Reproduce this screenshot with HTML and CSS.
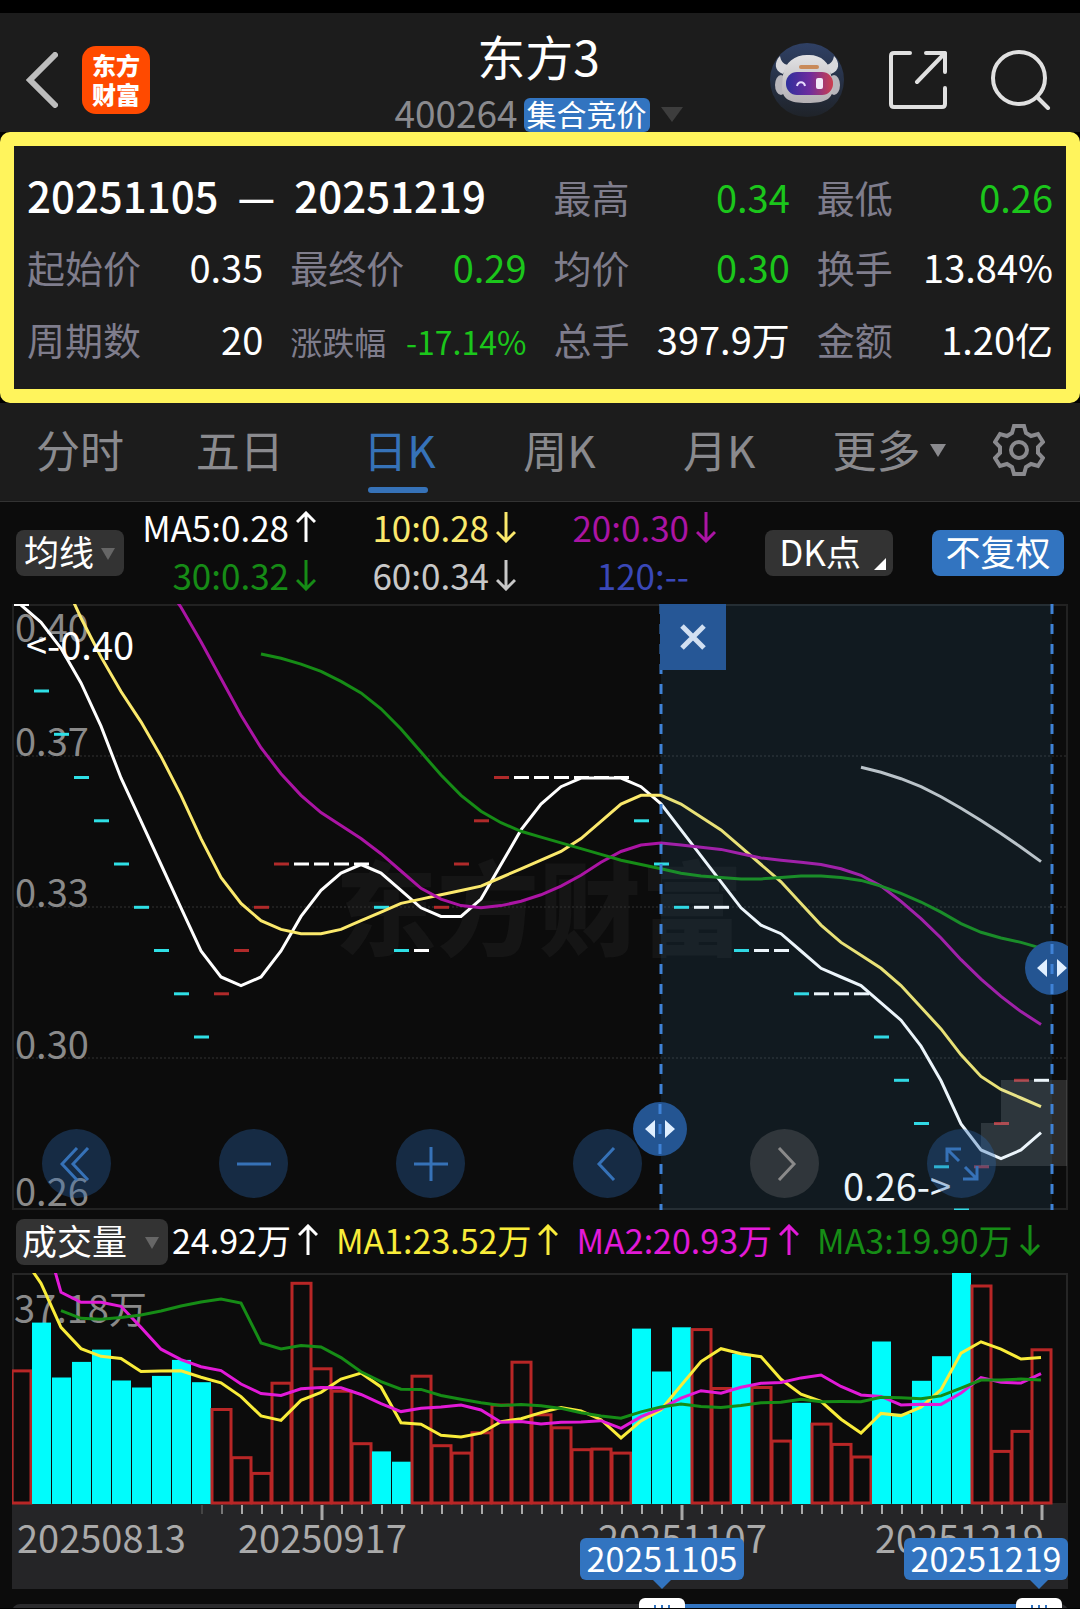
FILE: index.html
```html
<!DOCTYPE html>
<html lang="zh-CN">
<head>
    <meta charset="UTF-8">
    <meta name="viewport" content="width=device-width, initial-scale=1.0">
    <title>东方3 400264</title>
    <link rel="stylesheet" href="styles.css">
</head>
<body>
    <svg width="0" height="0" class="defs" aria-hidden="true">
        <symbol id="arrow-up" viewBox="0 0 20 32">
            <path d="M10 31V2M1 11L10 2L19 11" fill="none" stroke="currentColor" stroke-width="3"/>
        </symbol>
        <symbol id="arrow-down" viewBox="0 0 20 32">
            <path d="M10 1V30M1 21L10 30L19 21" fill="none" stroke="currentColor" stroke-width="3"/>
        </symbol>
    </svg>

    <header class="header">
        <div class="header-left">
            <button class="icon-btn" aria-label="返回">
                <svg width="32" height="56" viewBox="0 0 32 56">
                    <path d="M29 3L4 28L29 53" fill="none" stroke="#bdbdbd" stroke-width="6" stroke-linecap="round"/>
                </svg>
            </button>
            <div class="logo">东方<br>财富</div>
        </div>
        <div class="title">
            <h1>东方3</h1>
            <div class="subtitle">
                <span class="code">400264</span>
                <span class="badge">集合竞价</span>
                <span class="tri tri-title"></span>
            </div>
        </div>
        <div class="header-right">
            <button class="icon-btn" aria-label="助手">
                <svg width="76" height="76" viewBox="0 0 76 76">
                    <defs>
                        <linearGradient id="sky" x1="0" y1="0" x2="0" y2="1">
                            <stop offset="0" stop-color="#2f4064"/>
                            <stop offset="1" stop-color="#1f2329"/>
                        </linearGradient>
                        <linearGradient id="visor" x1="0" y1="0" x2="1" y2="0">
                            <stop offset="0" stop-color="#2f2f9c"/>
                            <stop offset="0.5" stop-color="#6d2c9e"/>
                            <stop offset="1" stop-color="#cc3f4e"/>
                        </linearGradient>
                        <linearGradient id="helmet" x1="0" y1="0" x2="0" y2="1">
                            <stop offset="0" stop-color="#e2e2e4"/>
                            <stop offset="1" stop-color="#b4b0b4"/>
                        </linearGradient>
                    </defs>
                    <circle cx="38" cy="38" r="37" fill="url(#sky)"/>
                    <path d="M11 14C5 20 5 29 14 32L19 23C14 22 12 19 11 14ZM65 14C71 20 71 29 62 32L57 23C62 22 64 19 65 14Z" fill="#d8d8dc"/>
                    <ellipse cx="12" cy="43" rx="6" ry="10" fill="#b8b6bc"/>
                    <ellipse cx="65" cy="43" rx="6" ry="10" fill="#b8b6bc"/>
                    <path d="M38 13C51 12 61 20 62 33L64 45C64 57 57 61 38 61C20 61 13 57 13 45L14 33C16 20 26 13 38 13Z" fill="url(#helmet)"/>
                    <rect x="17" y="30" width="47" height="23" rx="11" fill="url(#visor)"/>
                    <rect x="30" y="23" width="20" height="4" rx="2" fill="#c98a5a"/>
                    <path d="M28 44C29 39 35 39 36 44" fill="none" stroke="#e8dcff" stroke-width="2"/>
                    <rect x="47" y="36" width="7" height="11" rx="2" fill="#f2e8f8"/>
                </svg>
            </button>
            <button class="icon-btn" aria-label="分享">
                <svg width="58" height="58" viewBox="0 0 58 58" fill="none" stroke="#e0e0e0" stroke-width="4" stroke-linecap="round" stroke-linejoin="round">
                    <path d="M21 2H5Q2 2 2 5V53Q2 56 5 56H53Q56 56 56 53V37"/>
                    <path d="M37 2H56V21M56 2L28 31"/>
                </svg>
            </button>
            <button class="icon-btn" aria-label="搜索">
                <svg width="60" height="60" viewBox="0 0 60 60" fill="none" stroke="#e0e0e0" stroke-width="4" stroke-linecap="round">
                    <circle cx="28" cy="28" r="26"/>
                    <path d="M46 47L57 58"/>
                </svg>
            </button>
        </div>
    </header>

    <section class="summary">
        <div class="range"><span>20251105</span><span>—</span><span>20251219</span></div>
        <div class="item"><span>最高</span><b class="down">0.34</b></div>
        <div class="item"><span>最低</span><b class="down">0.26</b></div>
        <div class="item"><span>起始价</span><b>0.35</b></div>
        <div class="item"><span>最终价</span><b class="down">0.29</b></div>
        <div class="item"><span>均价</span><b class="down">0.30</b></div>
        <div class="item"><span>换手</span><b>13.84%</b></div>
        <div class="item"><span>周期数</span><b>20</b></div>
        <div class="item small"><span>涨跌幅</span><b class="down">-17.14%</b></div>
        <div class="item"><span>总手</span><b>397.9万</b></div>
        <div class="item"><span>金额</span><b>1.20亿</b></div>
    </section>

    <nav class="tabs">
        <button class="tab">分时</button>
        <button class="tab">五日</button>
        <button class="tab active">日K</button>
        <button class="tab">周K</button>
        <button class="tab">月K</button>
        <button class="tab more">更多<span class="tri tri-more"></span></button>
        <button class="icon-btn gear" aria-label="设置">
            <svg width="52" height="52" viewBox="0 0 52 52" fill="none" stroke="#8a8a8e" stroke-width="4">
                <path d="M21 2H31L33 9L38 12L45 10L50 18L45 23V29L50 34L45 42L38 40L33 43L31 50H21L19 43L14 40L7 42L2 34L7 29V23L2 18L7 10L14 12L19 9Z"/>
                <circle cx="26" cy="26" r="8"/>
            </svg>
        </button>
    </nav>

    <section class="ma-bar">
        <label class="pick">
            <select aria-label="指标"><option>均线</option></select>
        </label>
        <div class="ma-legend">
            <span class="ma5">MA5:0.28<svg class="arrow"><use href="#arrow-up"/></svg></span>
            <span class="ma10">10:0.28<svg class="arrow"><use href="#arrow-down"/></svg></span>
            <span class="ma20">20:0.30<svg class="arrow"><use href="#arrow-down"/></svg></span>
            <span class="ma30">30:0.32<svg class="arrow"><use href="#arrow-down"/></svg></span>
            <span class="ma60">60:0.34<svg class="arrow"><use href="#arrow-down"/></svg></span>
            <span class="ma120">120:--<svg class="arrow"></svg></span>
        </div>
        <button class="dk">DK点</button>
        <button class="adjust">不复权</button>
    </section>

    <div class="chart">
        <svg id="price" class="plot" viewBox="0 0 1056 606"></svg>
        <button class="close" aria-label="关闭">
            <svg width="28" height="28" viewBox="0 0 28 28">
                <path d="M3 3L25 25M25 3L3 25" stroke="#d2e0f2" stroke-width="5"/>
            </svg>
        </button>
        <div class="controls">
            <button class="round" aria-label="最早">
                <svg width="34" height="34" viewBox="0 0 34 34"><path d="M17 1L2 17L17 33M28 1L13 17L28 33"/></svg>
            </button>
            <button class="round" aria-label="缩小">
                <svg width="34" height="34" viewBox="0 0 34 34"><path d="M0 17H34"/></svg>
            </button>
            <button class="round" aria-label="放大">
                <svg width="34" height="34" viewBox="0 0 34 34"><path d="M0 17H34M17 0V34"/></svg>
            </button>
            <button class="round" aria-label="左移">
                <svg width="34" height="34" viewBox="0 0 34 34"><path d="M23 1L8 17L23 33"/></svg>
            </button>
            <button class="round off" aria-label="右移" disabled>
                <svg width="34" height="34" viewBox="0 0 34 34"><path d="M11 1L26 17L11 33"/></svg>
            </button>
            <button class="round" aria-label="全屏">
                <svg width="34" height="34" viewBox="0 0 34 34"><path d="M2 15V2H16M2 2L14 14M32 19V32H18M32 32L20 20"/></svg>
            </button>
        </div>
        <div class="handles">
            <button class="handle start" aria-label="区间起点">
                <svg width="54" height="54" viewBox="0 0 54 54">
                    <path d="M12 27L22 18V36ZM42 27L32 18V36Z" fill="#e0efff"/>
                    <path d="M27 2V12M27 22V32M27 42V52" stroke="#3f82d6" stroke-width="3"/>
                </svg>
            </button>
            <button class="handle end" aria-label="区间终点">
                <svg width="54" height="54" viewBox="0 0 54 54">
                    <path d="M12 27L22 18V36ZM42 27L32 18V36Z" fill="#e0efff"/>
                    <path d="M27 3V13M27 23V33M27 43V53" stroke="#3f82d6" stroke-width="3"/>
                </svg>
            </button>
        </div>
    </div>

    <section class="vol-bar">
        <label class="pick wide">
            <select aria-label="副图指标"><option>成交量</option></select>
        </label>
        <div class="vol-legend">
            <span>24.92万<svg class="arrow"><use href="#arrow-up"/></svg></span>
            <span class="v1">MA1:23.52万<svg class="arrow"><use href="#arrow-up"/></svg></span>
            <span class="v2">MA2:20.93万<svg class="arrow"><use href="#arrow-up"/></svg></span>
            <span class="v3">MA3:19.90万<svg class="arrow"><use href="#arrow-down"/></svg></span>
        </div>
    </section>

    <div class="chart">
        <svg id="volume" class="plot" viewBox="0 0 1056 232"></svg>
    </div>

    <div class="axis">
        <svg id="axis" class="plot" viewBox="0 0 1056 84"></svg>
        <span class="flag flag-start">20251105</span>
        <span class="flag flag-end">20251219</span>
    </div>

    <div class="slider">
        <div class="rail"></div>
        <div class="rail-fill"></div>
        <input type="range" min="0" max="1000" value="621" aria-label="起始日期">
        <input type="range" min="0" max="1000" value="994" aria-label="结束日期">
    </div>

    <script src="chart.js"></script>
</body>
</html>
```

FILE: styles.css
```css
* {
    box-sizing: border-box;
}

body {
    margin: 0;
    padding-top: 13px;
    background: #000;
    color: #fff;
    font-family: "Noto Sans CJK SC", "Liberation Sans", sans-serif;
    font-size: 38px;
}

button, select {
    font-family: inherit;
    color: inherit;
    border: none;
    padding: 0;
    margin: 0;
    background: none;
    cursor: pointer;
}

.defs {
    position: absolute;
}

.icon-btn {
    display: flex;
    align-items: center;
    justify-content: center;
}

.tri {
    display: inline-block;
    border-style: solid;
    border-color: transparent;
    border-bottom-width: 0;
}

/* header */
.header {
    display: grid;
    grid-template-columns: 1fr auto 1fr;
    align-items: center;
    height: 119px;
    padding: 14px 29px 0 26px;
    background: #1c1c1c;
}

.header-left, .header-right {
    display: flex;
    align-items: center;
}

.header-left {
    gap: 24px;
}

.header-right {
    justify-content: flex-end;
    gap: 44px;
}

.logo {
    width: 68px;
    height: 68px;
    padding-top: 4px;
    border-radius: 14px;
    background: #ff4a00;
    font-size: 24px;
    font-weight: 900;
    line-height: 29px;
    text-align: center;
}

.title {
    text-align: center;
}

.title h1 {
    margin: 0 0 16px;
    font-size: 48px;
    font-weight: 400;
    line-height: 54px;
}

.subtitle {
    display: flex;
    align-items: center;
    height: 34px;
}

.code {
    margin-right: 6px;
    color: #8a8a8e;
    font-size: 37px;
    line-height: 28px;
    padding-bottom: 6px;
}

.badge {
    height: 34px;
    padding: 0 3px;
    border-radius: 6px;
    background: #3274c0;
    font-size: 30px;
    line-height: 30px;
}

.tri-title {
    margin-left: 11px;
    border-width: 15px 11px 0;
    border-top-color: #3d3d3d;
}

/* interval statistics */
.summary {
    display: grid;
    grid-template-columns: repeat(4, 1fr);
    column-gap: 27px;
    grid-auto-rows: 72px;
    align-items: baseline;
    padding: 13px 13px 14px;
    border: 14px solid #fff45c;
    border-radius: 10px;
    background: #1c1c1c;
    line-height: 72px;
}

.range {
    display: flex;
    gap: 19px;
    grid-column: span 2;
    font-size: 42px;
    font-weight: 500;
    white-space: nowrap;
}

.item {
    display: flex;
    justify-content: space-between;
    white-space: nowrap;
}

.item span {
    color: #7f7d8c;
}

.item b {
    font-weight: 400;
}

.item .down {
    color: #1bc61b;
}

.small {
    font-size: 32px;
}

/* period tabs */
.tabs {
    display: flex;
    height: 99px;
    border-bottom: 1px solid #333;
    background: #1c1c1c;
}

.tab {
    position: relative;
    flex: 0 0 14.8%;
    padding-bottom: 6px;
    color: #8a8a8e;
    font-size: 44px;
    white-space: nowrap;
}

.tab.active {
    color: #3672b8;
}

.tab.active::after {
    content: "";
    position: absolute;
    left: 50%;
    bottom: 8px;
    width: 60px;
    height: 6px;
    margin-left: -32px;
    border-radius: 3px;
    background: #3672b8;
}

.more {
    padding-left: 20px;
}

.tri-more {
    margin-left: 9px;
    margin-bottom: 11px;
    border-width: 13px 8px 0;
    border-top-color: #8a8a8e;
}

.gear {
    flex: 1;
    padding-bottom: 4px;
}

/* moving average bar */
.ma-bar, .vol-bar {
    display: flex;
    align-items: center;
    padding: 0 16px;
    background: #0c0c0c;
}

.ma-bar {
    height: 102px;
}

.pick {
    position: relative;
    flex: none;
    width: 108px;
    height: 46px;
}

.pick.wide {
    width: 152px;
}

.pick select {
    display: block;
    appearance: none;
    width: 100%;
    height: 46px;
    padding: 0 0 4px 8px;
    border-radius: 8px;
    background: #333;
    font-size: 35px;
    line-height: 42px;
}

.pick::after {
    content: "";
    position: absolute;
    right: 9px;
    top: 18px;
    border: 7px solid transparent;
    border-top: 12px solid #666;
    border-bottom: none;
    pointer-events: none;
}

.pick.wide select {
    padding-left: 6px;
}

.ma-legend {
    display: grid;
    grid-template-columns: 192px 200px 200px;
    grid-auto-rows: 48px;
    align-items: center;
    padding-bottom: 4px;
    font-size: 35px;
}

.ma-legend span, .vol-legend span {
    display: flex;
    justify-content: flex-end;
    align-items: center;
    line-height: 48px;
    white-space: nowrap;
}

.arrow {
    width: 20px;
    height: 32px;
    margin-left: 7px;
}

.ma5 { color: #fff; }
.ma10 { color: #fbe96c; }
.ma20 { color: #ab14a4; }
.ma30 { color: #168c16; }
.ma60 { color: #c8c8c8; }
.ma120 { color: #3a48b8; }

.dk, .adjust {
    height: 46px;
    padding-bottom: 4px;
    border-radius: 8px;
    font-size: 35px;
    line-height: 42px;
}

.dk {
    position: relative;
    width: 128px;
    margin-left: 49px;
    padding-right: 18px;
    background: #333;
}

.dk::after {
    content: "";
    position: absolute;
    right: 7px;
    bottom: 6px;
    border-left: 12px solid transparent;
    border-bottom: 12px solid #fff;
}

.adjust {
    width: 132px;
    margin-left: auto;
    background: #3274c0;
}

/* charts */
.chart {
    position: relative;
    padding: 0 12px;
    background: #0c0c0c;
}

.plot {
    display: block;
    width: 100%;
    height: auto;
}

.plot text {
    font-size: 38px;
}

.plot .watermark {
    font-size: 102px;
    font-weight: 900;
}

.close {
    position: absolute;
    left: 61.1%;
    top: 0;
    display: flex;
    align-items: center;
    justify-content: center;
    width: 66px;
    height: 66px;
    background: #265796;
}

.controls {
    position: absolute;
    left: 42px;
    right: 84px;
    bottom: 12px;
    display: flex;
    justify-content: space-between;
}

.round {
    display: flex;
    align-items: center;
    justify-content: center;
    width: 69px;
    height: 69px;
    border-radius: 50%;
    background: rgba(42, 102, 175, 0.35);
}

.round path {
    fill: none;
    stroke: #3672b8;
    stroke-width: 3;
}

.round.off {
    background: rgba(128, 128, 128, 0.28);
}

.round.off path {
    stroke: #8a8a8a;
}

.handles {
    position: absolute;
    left: 0;
    right: 12px;
    top: 0;
    bottom: 0;
    overflow: hidden;
    pointer-events: none;
}

.handle {
    position: absolute;
    width: 54px;
    height: 54px;
    border-radius: 50%;
    background: #245592;
    pointer-events: auto;
}

.handle svg {
    display: block;
}

.start {
    right: 381px;
    bottom: 54px;
}

.end {
    right: -11px;
    bottom: 215px;
}

/* volume bar */
.vol-bar {
    height: 63px;
}

.vol-legend {
    display: flex;
    gap: 18px;
    margin-left: 4px;
    padding-bottom: 4px;
    font-size: 34px;
}

.v1 { color: #f9ec3a; }
.v2 { color: #e21ad8; }
.v3 { color: #168c16; }

/* date axis */
.axis {
    position: relative;
    padding: 0 12px;
    background: #0c0c0c;
}

.axis .plot {
    background: #252527;
}

.flag {
    position: absolute;
    bottom: 9px;
    width: 164px;
    height: 42px;
    border-radius: 6px;
    background: #3274c0;
    font-size: 34px;
    line-height: 40px;
    text-align: center;
}

.flag::after {
    content: "";
    position: absolute;
    top: 42px;
    border: 9px solid transparent;
    border-top-color: #3274c0;
    border-bottom: none;
}

.flag-start {
    right: 336px;
}

.flag-start::after {
    left: 73px;
}

.flag-end {
    right: 12px;
}

.flag-end::after {
    right: 20px;
}

/* interval slider */
.slider {
    position: relative;
    height: 19px;
    overflow: hidden;
    background: #0c0c0c;
}

.rail, .rail-fill {
    position: absolute;
    top: 15px;
    height: 16px;
}

.rail {
    left: 12px;
    right: 12px;
    border-radius: 8px;
    background: #2c2c2e;
}

.rail-fill {
    left: 61.2%;
    right: 41px;
    background: #3274c0;
}

.slider input {
    appearance: none;
    position: absolute;
    left: 12px;
    top: 9px;
    width: calc(100% - 24px);
    height: 34px;
    margin: 0;
    background: none;
    pointer-events: none;
}

.slider input::-webkit-slider-thumb {
    appearance: none;
    width: 46px;
    height: 34px;
    border-radius: 6px;
    background:
        linear-gradient(#3274c0, #3274c0) 15px 7px / 2px 20px no-repeat,
        linear-gradient(#3274c0, #3274c0) 22px 7px / 2px 20px no-repeat,
        linear-gradient(#3274c0, #3274c0) 29px 7px / 2px 20px no-repeat,
        #fff;
    pointer-events: auto;
}
```

FILE: chart.js
```js
// the first 17 days are off screen, they only feed the averages
const HIDDEN = 17;
const STEP = 20;
const FIRST_X = 9;

const closes = [
    0.37, 0.38, 0.39, 0.41, 0.42, 0.44, 0.46, 0.48, 0.49, 0.48, 0.46, 0.44, 0.42, 0.40, 0.40, 0.40, 0.40,
    0.40, 0.38, 0.37, 0.36, 0.35, 0.34, 0.33, 0.32, 0.31, 0.30, 0.31, 0.32, 0.33, 0.34, 0.34, 0.34, 0.34, 0.34,
    0.33, 0.32, 0.32, 0.33, 0.34, 0.35, 0.36, 0.36, 0.36, 0.36, 0.36, 0.36, 0.36, 0.35, 0.34, 0.33, 0.33, 0.33,
    0.32, 0.32, 0.32, 0.31, 0.31, 0.31, 0.31, 0.30, 0.29, 0.28, 0.27, 0.26, 0.27, 0.28, 0.29, 0.29
];

const volumes = [
    47.56, 28.03, 14.42, 10.06, 7.64, 6.99, 6.62, 5.60, 20.39, 133.97, 38.95, 24.80, 26.26, 52.73, 55.80, 40.03, 31.05,
    21.52, 29.16, 20.28, 22.81, 24.80, 19.80, 18.67, 20.55, 23.14, 19.53, 15.28, 7.48, 4.95, 19.53, 35.67, 21.85, 18.24, 9.74,
    8.34, 6.67, 20.66, 9.42, 8.23, 11.51, 15.98, 22.92, 14.42, 12.32, 8.77, 8.88, 8.23, 28.19, 21.25, 28.41, 28.19, 18.67,
    24.11, 18.83, 10.17, 16.20, 12.91, 9.63, 7.59, 26.10, 14.42, 19.75, 23.73, 37.18, 35.24, 8.50, 11.73, 24.92
];

const priceY = p => 1 + (0.40 - p) * 4325;
const volumeY = v => 230 - v / 37.18 * 230;
const dayX = i => FIRST_X + (i - HIDDEN) * STEP;

function averageLine(data, days, toY, color) {
    const points = [];
    for (let i = Math.max(days - 1, HIDDEN); i < data.length; i++) {
        const sum = data.slice(i - days + 1, i + 1).reduce((a, b) => a + b, 0);
        points.push(dayX(i) + ',' + toY(sum / days).toFixed(1));
    }
    return `<polyline points="${points.join(' ')}" fill="none" stroke="${color}" stroke-width="3"/>`;
}

function label(x, y, text, color) {
    return `<text x="${x}" y="${y}" fill="${color}">${text}</text>`;
}

function drawPrice() {
    let out = '<text class="watermark" x="323" y="344" fill="#151515">东方财富</text>';
    for (const y of [152, 303, 454]) {
        out += `<path d="M0 ${y}H1056" stroke="#333" stroke-dasharray="2 2"/>`;
    }
    out += '<rect x="1" y="1" width="1054" height="604" fill="none" stroke="#222" stroke-width="2"/>';
    out += label(3, 38, '0.40', '#8a8a8a') + label(3, 152, '0.37', '#8a8a8a') + label(3, 303, '0.33', '#8a8a8a');
    out += label(3, 455, '0.30', '#8a8a8a') + label(3, 602, '0.26', '#8a8a8a');

    for (let i = HIDDEN; i < closes.length; i++) {
        const diff = closes[i] - closes[i - 1];
        const color = diff > 0 ? '#b02a2a' : diff < 0 ? '#2fe0e6' : '#fff';
        out += `<rect x="${dayX(i) - 7}" y="${(priceY(closes[i]) - 2).toFixed(1)}" width="15" height="3" fill="${color}"/>`;
    }

    out += averageLine(closes, 5, priceY, '#fff');
    out += averageLine(closes, 10, priceY, '#fbe96c');
    out += averageLine(closes, 20, priceY, '#ab14a4');
    out += averageLine(closes, 30, priceY, '#168c16');
    out += averageLine(closes, 60, priceY, '#c8c8c8');
    out += label(14, 56, '&lt;-0.40', '#fff') + label(831, 597, '0.26-&gt;', '#fff');

    // selected interval
    out += '<path d="M989 476H1055V562H969V519H989Z" fill="#fff" fill-opacity="0.13"/>';
    out += '<rect x="649" y="0" width="391" height="606" fill="#46a0dc" fill-opacity="0.1"/>';
    out += '<path d="M649 0V606M1040 0V606" stroke="#3f82d6" stroke-width="3" stroke-dasharray="10 10"/>';
    document.getElementById('price').innerHTML = out;
}

function drawVolume() {
    let out = '<rect x="1" y="1" width="1054" height="230" fill="none" stroke="#262626" stroke-width="2"/>';
    out += label(2, 50, '37.18万', '#8a8a8a');
    for (let i = HIDDEN; i < volumes.length; i++) {
        const x = dayX(i);
        const y = volumeY(volumes[i]);
        if (closes[i] < closes[i - 1]) {
            out += `<rect x="${x - 9}" y="${y.toFixed(1)}" width="19" height="${(231 - y).toFixed(1)}" fill="#00fcfc"/>`;
        } else {
            out += `<rect x="${x - 9}" y="${(y + 1).toFixed(1)}" width="19" height="${(229 - y).toFixed(1)}" fill="none" stroke="#b82626" stroke-width="3"/>`;
        }
    }
    out += averageLine(volumes, 5, volumeY, '#f9ec3a');
    out += averageLine(volumes, 10, volumeY, '#e21ad8');
    out += averageLine(volumes, 20, volumeY, '#168c16');
    document.getElementById('volume').innerHTML = out;
}

function drawAxis() {
    let out = '';
    for (let i = 9; i < 52; i++) {
        const major = i === 15 || i === 33 || i === 51;
        const color = i === 9 ? '#444' : i === 10 ? '#777' : '#a8a8a8';
        out += `<path d="M${FIRST_X + 1 + i * STEP} 0V${major ? 15 : 9}" stroke="${color}" stroke-width="${major ? 3 : 2}"/>`;
    }
    out += label(5, 48, '20250813', '#aaa') + label(226, 48, '20250917', '#aaa');
    out += label(586, 48, '20251107', '#aaa') + label(863, 48, '20251219', '#aaa');
    document.getElementById('axis').innerHTML = out;
}

drawPrice();
drawVolume();
drawAxis();
```
